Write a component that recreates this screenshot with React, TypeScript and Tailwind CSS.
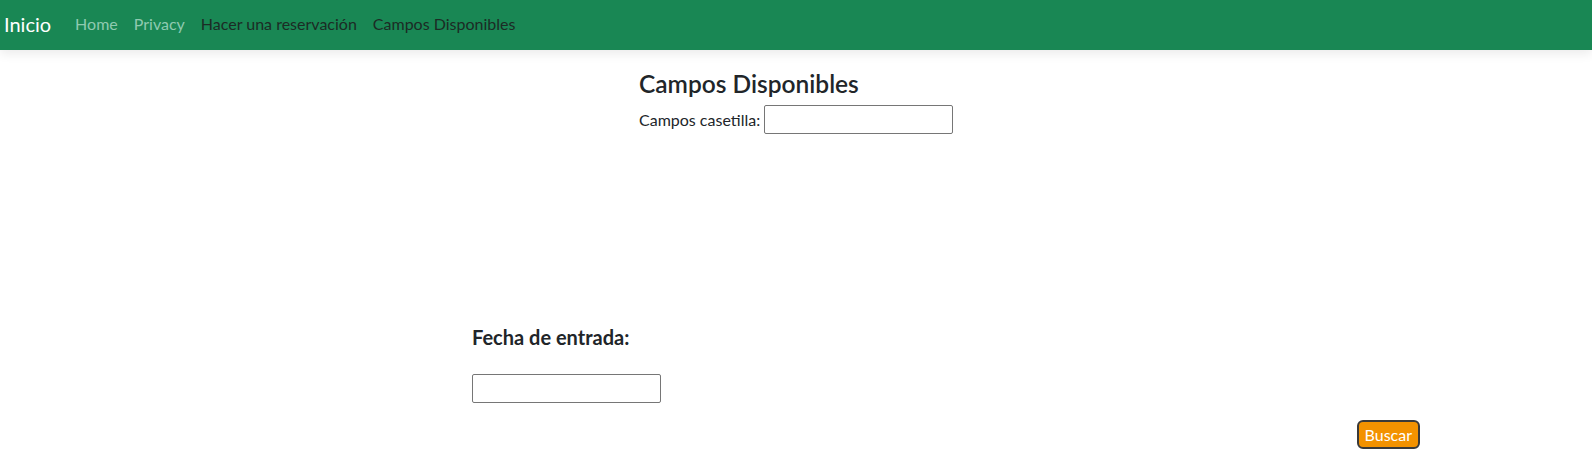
export default function App() {
  const links = [
    { label: 'Home', dark: false },
    { label: 'Privacy', dark: false },
    { label: 'Hacer una reservación', dark: true },
    { label: 'Campos Disponibles', dark: true },
  ];

  return (
    <div className="min-h-screen bg-white text-[#212529] font-['Lato',sans-serif]">
      <nav className="h-[50px] pb-[3px] bg-[#198754] flex items-center shadow-[0_4px_10px_rgba(0,0,0,0.08)]">
        <span className="pl-[4px] pr-[16px] text-[20px] text-white">Inicio</span>
        <ul className="flex">
          {links.map((l) => (
            <li
              key={l.label}
              className={`px-[8px] text-[16px] ${l.dark ? 'text-[#1c2b25]' : 'text-[#8fcab0]'}`}
            >
              {l.label}
            </li>
          ))}
        </ul>
      </nav>

      <div className="pl-[639px] pt-[19px]">
        <h3 className="text-[24.5px] font-semibold leading-[1.2] mb-[7px]">Campos Disponibles</h3>
        <div className="flex items-center text-[16px]">
          <label>Campos casetilla:</label>
          <input className="ml-[4px] w-[189px] h-[29px] border border-[#767676] rounded-[2px]" />
        </div>
      </div>

      <div className="pl-[472px] pt-[188px]">
        <h5 className="text-[20px] font-bold leading-[1.5]">Fecha de entrada:</h5>
        <input className="mt-[22px] w-[189px] h-[29px] border border-[#767676] rounded-[2px] block" />
      </div>

      <div className="flex justify-end pr-[172px] pt-[17px]">
        <button className="h-[29px] px-[6px] bg-[#f39200] text-white text-[16px] border-2 border-[#3a3a3a] rounded-[6px] leading-none">
          Buscar
        </button>
      </div>
    </div>
  );
}
